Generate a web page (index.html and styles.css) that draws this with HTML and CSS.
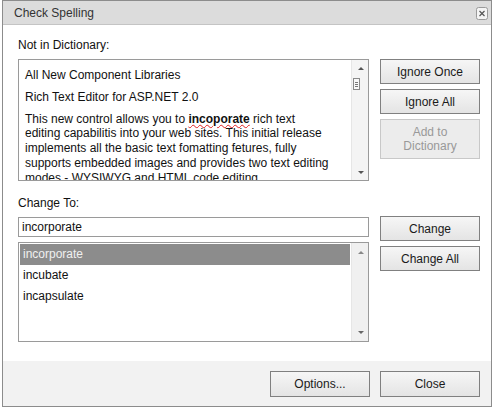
FILE: index.html
```html
<!DOCTYPE html>
<html>
<head>
<meta charset="utf-8">
<link rel="stylesheet" href="styles.css">
</head>
<body>
<div class="dialog">
  <div class="titlebar">
    <span class="title">Check Spelling</span>
    <span class="close-x">
      <svg width="12" height="13" viewBox="0 0 12 13"><rect x="0.5" y="0.5" width="11" height="12" rx="2" fill="#f4f4f4" stroke="#9a9a9a"/><path d="M3.5 4 L8.5 9 M8.5 4 L3.5 9" stroke="#555" stroke-width="1.2"/></svg>
    </span>
  </div>
  <div class="content">
    <div class="label first">Not in Dictionary:</div>
    <div class="row">
      <div class="textbox">
        <div class="textbox-inner">
          <p>All New Component Libraries</p>
          <p>Rich Text Editor for ASP.NET 2.0</p>
          <p class="para">This new control allows you to <b class="miss">incoporate</b> rich text<br>editing capabilitis into your web sites. This initial release<br>implements all the basic text fomatting fetures, fully<br>supports embedded images and provides two text editing<br>modes - WYSIWYG and HTML code editing.</p>
        </div>
        <div class="scrollbar">
          <span class="arrow up"></span>
          <span class="thumb"><i></i><i></i><i></i></span>
          <span class="track"></span>
          <span class="arrow down"></span>
        </div>
      </div>
      <div class="buttons">
        <button class="btn">Ignore Once</button>
        <button class="btn">Ignore All</button>
        <button class="btn tall" disabled>Add to<br>Dictionary</button>
      </div>
    </div>
    <div class="label second">Change To:</div>
    <div class="row">
      <div class="leftcol">
        <div class="input">incorporate</div>
        <div class="listbox">
          <div class="items">
            <div class="item selected">incorporate</div>
            <div class="item">incubate</div>
            <div class="item">incapsulate</div>
          </div>
          <div class="scrollbar list">
            <span class="arrow up"></span>
            <span class="track"></span>
            <span class="arrow down"></span>
          </div>
        </div>
      </div>
      <div class="buttons">
        <button class="btn">Change</button>
        <button class="btn">Change All</button>
      </div>
    </div>
  </div>
  <div class="footer">
    <button class="btn foot">Options...</button>
    <button class="btn foot">Close</button>
  </div>
</div>
</body>
</html>
```
FILE: styles.css
```css
* { box-sizing: border-box; }
html, body { margin: 0; padding: 0; background: #fff; }
body {
  font-family: "Liberation Sans", Arial, sans-serif;
  font-size: 12px;
  color: #1a1a1a;
}
.dialog {
  margin-left: 2px;
  width: 490px;
  height: 407px;
  border: 1px solid #8c8c8c;
  display: flex;
  flex-direction: column;
  background: #fff;
}
.titlebar {
  height: 24px;
  flex: none;
  background: #dcdcdc;
  border-bottom: 1px solid #c4c4c4;
  display: flex;
  align-items: center;
  justify-content: space-between;
  padding: 0 3px 0 11px;
}
.title { color: #333; font-size: 12px; }
.close-x { display: flex; width: 12px; height: 13px; margin-top: 2px; }
.content {
  flex: 1;
  padding: 0 11px 0 15px;
}
.label { line-height: 15px; color: #111; }
.label.first { margin-top: 13px; margin-bottom: 6px; }
.label.second { margin-top: 15px; margin-bottom: 5px; }
.row {
  display: flex;
  gap: 11px;
  align-items: flex-start;
}
.textbox {
  width: 351px;
  height: 122px;
  border: 1px solid #9a9a9a;
  display: flex;
  overflow: hidden;
}
.textbox-inner {
  flex: 1;
  padding: 8px 0 0 6px;
  overflow: hidden;
  white-space: nowrap;
  color: #111;
}
.textbox-inner p { margin: 0 0 7px; line-height: 14.75px; }
.miss {
  text-decoration: underline wavy #e02020;
  text-decoration-thickness: 1px;
  text-underline-offset: 1px;
}
.scrollbar {
  width: 17px;
  flex: none;
  background: #f4f4f4;
  border-left: 1px solid #e6e6e6;
  display: flex;
  flex-direction: column;
  align-items: center;
  padding: 7px 0 6px;
}
.scrollbar .track { flex: 1; }
.arrow {
  width: 0; height: 0;
  border-left: 3px solid transparent;
  border-right: 3px solid transparent;
  margin-left: 1px;
}
.arrow.up { border-bottom: 3px solid #555; }
.arrow.down { border-top: 3px solid #555; }
.thumb {
  margin-top: 8px;
  align-self: flex-start;
  margin-left: 1px;
  width: 7px;
  height: 12px;
  border: 1px solid #8a8a8a;
  background: #f8f8f8;
  display: flex;
  flex-direction: column;
  justify-content: center;
  gap: 1px;
  padding: 0 1px;
}
.thumb i { display: block; height: 1px; background: #777; }
.scrollbar.list { padding: 8px 0 7px; background: #f0f0f0; }
.scrollbar.list .arrow.up { border-bottom-color: #888; }
.scrollbar.list .arrow.down { border-top-color: #666; }
.buttons {
  width: 100px;
  display: flex;
  flex-direction: column;
  gap: 5px;
}
.btn {
  font-family: "Liberation Sans", Arial, sans-serif;
  font-size: 12px;
  color: #1a1a1a;
  height: 25px;
  width: 100px;
  border: 1px solid #808080;
  background: linear-gradient(#f6f6f6, #e4e4e4);
  padding: 0;
  line-height: 14px;
  border-radius: 0;
}
.btn.tall { height: 40px; }
.btn:disabled {
  border-color: #c8c8c8;
  background: #ececec;
  color: #999;
}
.leftcol {
  width: 351px;
  display: flex;
  flex-direction: column;
}
.input {
  margin-top: 1px;
  height: 20px;
  border: 1px solid #9a9a9a;
  padding: 0 3px;
  line-height: 18px;
  color: #111;
}
.listbox {
  margin-top: 5px;
  height: 100px;
  border: 1px solid #9a9a9a;
  display: flex;
}
.items { flex: 1; padding: 1px; }
.item {
  height: 21px;
  line-height: 21px;
  padding-left: 3px;
  color: #111;
}
.item.selected { background: #8c8c8c; color: #f0f0f0; }
.footer {
  flex: none;
  height: 45px;
  background: #f2f2f2;
  display: flex;
  justify-content: flex-end;
  gap: 10px;
  padding: 10px 11px 0 0;
}
.btn.foot { height: 26px; }
```
